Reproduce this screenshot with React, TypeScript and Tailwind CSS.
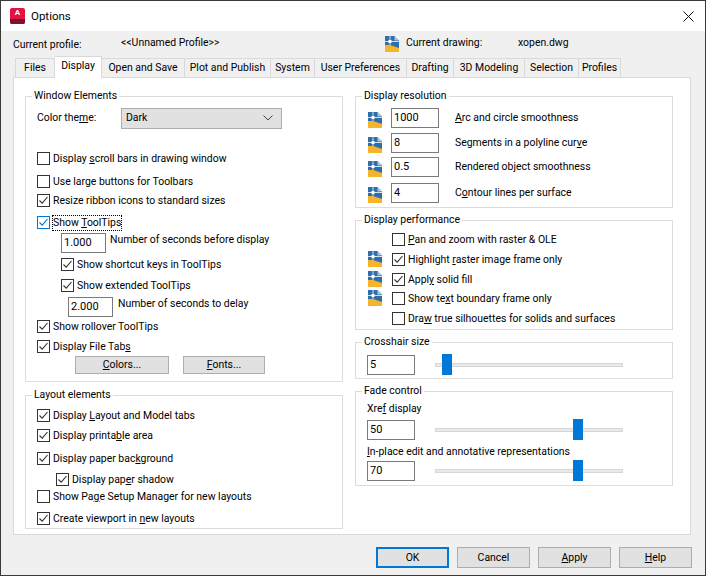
import React from 'react';

const Blueprint = ({ className = '' }: { className?: string }) => (
  <svg className={`shrink-0 ${className}`} width="14" height="16" viewBox="0 0 14 16">
    <rect x="0" y="0" width="14" height="16" fill="#2f6ea8" />
    <path d="M0 9 L5 9 L14 12 L14 16 L0 16 Z" fill="#f6b42c" />
    <path d="M9.5 0 L14 0 L14 4.5 Z" fill="#ffffff" />
    <path d="M9.5 0 L14 4.5 L9.5 4.5 Z" fill="#a9c6e0" />
    <path d="M5 0 V9 M0 5.5 H14" stroke="#cfe0ef" strokeWidth="1" fill="none" />
    <rect x="3.5" y="4" width="3" height="3" fill="#ffffff" />
  </svg>
);

const Check = ({ checked, focused }: { checked?: boolean; focused?: boolean }) => (
  <span className={`flex h-[13px] w-[13px] shrink-0 items-center justify-center border bg-white ${focused ? 'border-[#0078d7]' : 'border-[#333333]'}`}>
    {checked && (
      <svg width="11" height="11" viewBox="0 0 11 11">
        <path d="M1.5 5.5 L4.2 8.2 L9.5 2" fill="none" stroke={focused ? '#0078d7' : '#333333'} strokeWidth="1.1" />
      </svg>
    )}
  </span>
);

const CheckRow = ({ checked, focused, className, children }: { checked?: boolean; focused?: boolean; className: string; children: React.ReactNode }) => (
  <div className={`flex items-start ${className}`}>
    <Check checked={checked} focused={focused} />
    <span className={`ml-[3px] whitespace-nowrap ${focused ? 'outline-1 outline-dotted outline-black' : ''}`}>{children}</span>
  </div>
);

const Field = ({ value, className }: { value: string; className: string }) => (
  <div className={`flex h-5 items-center border border-[#7a7a7a] bg-white pl-[2px] text-[11px] ${className}`}>{value}</div>
);

const Group = ({ title, className, pad, children }: { title: string; className: string; pad: string; children: React.ReactNode }) => (
  <fieldset className={`border border-[#dcdcdc] ${className}`}>
    <legend className="ml-[6px] px-[2px] leading-[14px]">{title}</legend>
    <div className={pad}>{children}</div>
  </fieldset>
);

const Slider = ({ pos, className = '' }: { pos: string; className?: string }) => (
  <div className={`relative h-1 w-[188px] border border-[#d6d6d6] bg-[#e7eaea] ${className}`}>
    <div className={`absolute top-[-10px] h-[21px] w-[10px] bg-[#0078d7] ${pos}`} />
  </div>
);

const Btn = ({ children, def, className = 'w-[73px] h-[21px]' }: { children: React.ReactNode; def?: boolean; className?: string }) => (
  <button className={`flex items-center justify-center bg-[#e1e1e1] ${def ? 'border-2 border-[#0078d7]' : 'border border-[#adadad]'} ${className}`}>
    <span>{children}</span>
  </button>
);

const tabs = ['Files', 'Display', 'Open and Save', 'Plot and Publish', 'System', 'User Preferences', 'Drafting', '3D Modeling', 'Selection', 'Profiles'];
const tabWidths = ['w-[40px]', 'w-[47px]', 'w-[83px]', 'w-[86px]', 'w-[44px]', 'w-[92px]', 'w-[47px]', 'w-[71px]', 'w-[54px]', 'w-[42px]'];

export default function App() {
  return (
    <div className="h-[576px] w-[706px] overflow-hidden border border-[#3a3a3a] bg-[#f0f0f0] font-['Roboto',sans-serif] text-[10.45px] leading-[14px] text-black">
      <div className="flex h-[30px] items-center bg-white pl-[9px]">
        <div className="relative flex h-4 w-[15px] items-start justify-center rounded-[2px] bg-[#e2133f] text-[8px] font-bold leading-[10px] text-white">
          A
          <div className="absolute bottom-0 h-[5px] w-full rounded-b-[2px] bg-[#7d1230]" />
        </div>
        <span className="ml-[6px] text-[11.5px]">Options</span>
        <svg className="ml-auto mr-[11px]" width="11" height="11" viewBox="0 0 11 11">
          <path d="M0.5 0.5 L10.5 10.5 M10.5 0.5 L0.5 10.5" stroke="#111" strokeWidth="1" />
        </svg>
      </div>

      <div className="flex h-[27px] items-start">
        <span className="ml-3 mt-[7px] w-[108px]">Current profile:</span>
        <span className="mt-[5px] w-[264px]">&lt;&lt;Unnamed Profile&gt;&gt;</span>
        <Blueprint className="mt-[5px]" />
        <span className="ml-[7px] mt-[5px] w-[112px]">Current drawing:</span>
        <span className="mt-[5px]">xopen.dwg</span>
      </div>

      <div className="ml-[14px] flex h-[19px] items-end">
        {tabs.map((t, i) => (
          <div
            key={t}
            className={`relative flex items-center justify-center whitespace-nowrap border-t border-r border-[#d9d9d9] ${i === 0 ? 'border-l' : ''} ${tabWidths[i]} ${
              t === 'Display' ? 'z-10 mb-[-1px] h-[22px] bg-white pb-[3px]' : 'h-[19px] bg-[#f0f0f0]'
            }`}
          >
            {t}
          </div>
        ))}
      </div>

      <div className="ml-3 flex h-[458px] w-[678px] gap-3 border border-[#d9d9d9] bg-white pl-[11px] pt-[11px]">
        <div className="flex w-[318px] flex-col">
          <Group title="Window Elements" className="h-[293px]" pad="pl-[11px]">
            <div className="mt-[3px] flex h-[24px] items-center">
              <span className="w-[84px]">Color the<u>m</u>e:</span>
              <div className="flex h-[21px] w-[161px] items-center justify-between border border-[#adadad] bg-[#e1e1e1] pl-1 pr-2">
                Dark
                <svg width="10" height="6" viewBox="0 0 10 6"><path d="M0.5 0.5 L5 5 L9.5 0.5" fill="none" stroke="#444" /></svg>
              </div>
            </div>
            <CheckRow className="mt-[22px]"><span>Display <u>s</u>croll bars in drawing window</span></CheckRow>
            <CheckRow className="mt-[9px]">Use large buttons for Toolbars</CheckRow>
            <CheckRow checked className="mt-[5px]">Resize ribbon icons to standard sizes</CheckRow>
            <CheckRow checked focused className="mt-[8px]"><span>Show <u>T</u>oolTips</span></CheckRow>
            <div className="ml-[24px] mt-[3px] flex items-start">
              <Field value="1.000" className="w-[45px]" />
              <span className="ml-[4px]">Number of seconds before display</span>
            </div>
            <CheckRow checked className="ml-[24px] mt-[5px]">Show shortcut keys in ToolTips</CheckRow>
            <CheckRow checked className="ml-[24px] mt-[7px]">Show extended ToolTips</CheckRow>
            <div className="ml-[31px] mt-[4px] flex items-start">
              <Field value="2.000" className="w-[45px]" />
              <span className="ml-[5px]">Number of seconds to delay</span>
            </div>
            <CheckRow checked className="mt-[3px]">Show rollover ToolTips</CheckRow>
            <CheckRow checked className="mt-[6px]"><span>Display File Tab<u>s</u></span></CheckRow>
            <div className="ml-[38px] mt-[2px] flex gap-[14px]">
              <Btn className="h-[18px] w-[94px]"><u>C</u>olors...</Btn>
              <Btn className="h-[18px] w-[82px]"><u>F</u>onts...</Btn>
            </div>
          </Group>
          <Group title="Layout elements" className="mt-[6px] h-[141px]" pad="pl-[11px]">
            <CheckRow checked className="mt-[7px]"><span>Display <u>L</u>ayout and Model tabs</span></CheckRow>
            <CheckRow checked className="mt-[6px]">Display printa<u>b</u>le area</CheckRow>
            <CheckRow checked className="mt-[9px]">Display paper bac<u>k</u>ground</CheckRow>
            <CheckRow checked className="ml-[19px] mt-[7px]">Display pap<u>e</u>r shadow</CheckRow>
            <CheckRow className="mt-[3px]">Show Pa<u>g</u>e Setup Manager for new layouts</CheckRow>
            <CheckRow checked className="mt-[8px]">Create viewport in <u>n</u>ew layouts</CheckRow>
          </Group>
        </div>

        <div className="flex w-[318px] flex-col">
          <Group title="Display resolution" className="h-[119px]" pad="pl-3">
            {[
              ['1000', <span><u>A</u>rc and circle smoothness</span>, 'mt-[5px]'],
              ['8', <span>Segments in a polyline cur<u>v</u>e</span>, 'mt-[5px]'],
              ['0.5', <span>Rendered ob<u>j</u>ect smoothness</span>, 'mt-[4px]'],
              ['4', <span>C<u>o</u>ntour lines per surface</span>, 'mt-[6px]'],
            ].map(([v, label, m], i) => (
              <div key={i} className={`flex items-center ${m}`}>
                <Blueprint className="mt-[3px]" />
                <Field value={v as string} className="ml-[9px] w-[48px]" />
                <span className="ml-4">{label}</span>
              </div>
            ))}
          </Group>
          <Group title="Display performance" className="mt-[5px] h-[117px]" pad="pl-[12px]">
            <CheckRow className="ml-[24px] mt-[6px]"><span><u>P</u>an and zoom with raster &amp; OLE</span></CheckRow>
            <div className="mt-[4px] flex items-start">
              <Blueprint />
              <CheckRow checked className="ml-[10px] mt-[2px]"><span>Highlight <u>r</u>aster image frame only</span></CheckRow>
            </div>
            <div className="mt-[4px] flex items-start">
              <Blueprint />
              <CheckRow checked className="ml-[10px] mt-[2px]"><span>Appl<u>y</u> solid fill</span></CheckRow>
            </div>
            <div className="mt-[3px] flex items-start">
              <Blueprint />
              <CheckRow className="ml-[10px] mt-[2px]"><span>Show te<u>x</u>t boundary frame only</span></CheckRow>
            </div>
            <CheckRow className="ml-[24px] mt-[6px]"><span>Dra<u>w</u> true silhouettes for solids and surfaces</span></CheckRow>
          </Group>
          <Group title="Crosshair size" className="mt-[5px] h-[44px]" pad="pl-[11px]">
            <div className="mt-[6px] flex items-center">
              <Field value="5" className="w-[48px]" />
              <Slider pos="left-[6px]" className="ml-5" />
            </div>
          </Group>
          <Group title="Fade control" className="mt-[5px] h-[102px]" pad="pl-[11px]">
            <div className="mt-[4px]">Xre<u>f</u> display</div>
            <div className="mt-[4px] flex items-center">
              <Field value="50" className="w-[48px]" />
              <Slider pos="left-[137px]" className="ml-5" />
            </div>
            <div className="mt-[5px]"><u>I</u>n-place edit and annotative representations</div>
            <div className="mt-[2px] flex items-center">
              <Field value="70" className="w-[48px]" />
              <Slider pos="left-[137px]" className="ml-5" />
            </div>
          </Group>
        </div>
      </div>

      <div className="ml-[375px] mt-[12px] flex gap-2">
        <Btn def>OK</Btn>
        <Btn>Cancel</Btn>
        <Btn><u>A</u>pply</Btn>
        <Btn><u>H</u>elp</Btn>
      </div>
    </div>
  );
}
